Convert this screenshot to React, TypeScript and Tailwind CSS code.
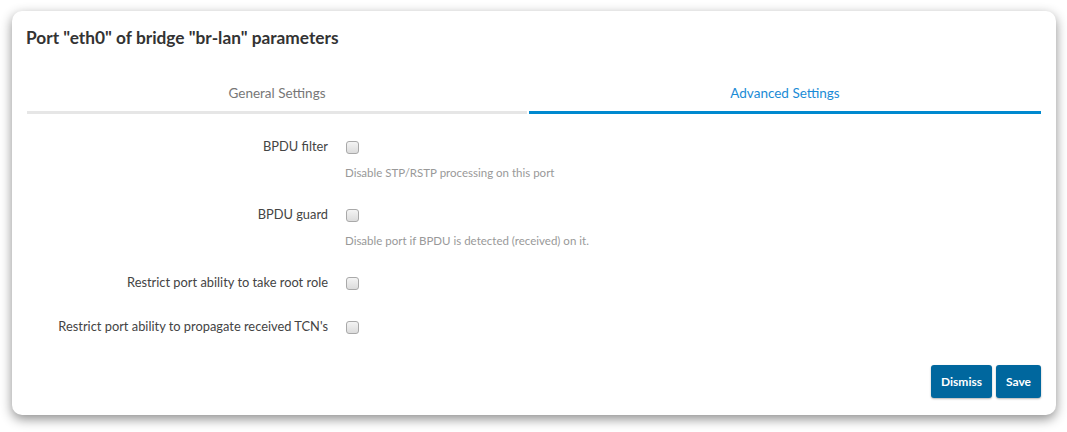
import React from "react";

const rows = [
  { label: "BPDU filter", help: "Disable STP/RSTP processing on this port" },
  { label: "BPDU guard", help: "Disable port if BPDU is detected (received) on it." },
  { label: "Restrict port ability to take root role" },
  { label: "Restrict port ability to propagate received TCN's" },
];

function Checkbox() {
  return (
    <span className="block h-[13px] w-[13px] rounded-[3px] border border-[#a9a9a9] bg-gradient-to-b from-[#f4f4f4] to-[#dcdcdc]" />
  );
}

export default function App() {
  return (
    <div className="min-h-screen bg-white pl-[12px] pt-[11px] font-['Lato','Noto_Sans',sans-serif]">
      <div className="flex h-[404px] w-[1044px] flex-col rounded-[10px] bg-white px-[15px] shadow-[0_4px_12px_rgba(0,0,0,0.45)]">
        <h1 className="-ml-[1px] mt-[17px] h-[20px] text-[17.3px] font-bold leading-[20px] text-[#333]">
          Port "eth0" of bridge "br-lan" parameters
        </h1>
        <div className="mt-[24px] flex gap-[2px]">
          <div className="flex h-[42px] w-[500px] items-center justify-center border-b-[3px] border-[#e6e6e6] pt-[3px] text-[13.5px] text-[#777]">
            General Settings
          </div>
          <div className="flex h-[42px] flex-1 items-center justify-center border-b-[3px] border-[#0089cf] pt-[3px] text-[13.5px] text-[#1a8bd6]">
            Advanced Settings
          </div>
        </div>
        <div className="mt-[11px] flex flex-col">
          {rows.map((r) => (
            <div key={r.label} className="grid grid-cols-[301px_1fr] gap-x-[18px]">
              <div className="flex h-[44px] items-center justify-end text-[12.85px] text-[#444]">
                {r.label}
              </div>
              <div className="flex h-[44px] items-center">
                <Checkbox />
              </div>
              {r.help && (
                <>
                  <div />
                  <div className="-ml-[1px] -mt-[4px] h-[28px] text-[11.5px] leading-[16px] text-[#999]">{r.help}</div>
                </>
              )}
            </div>
          ))}
        </div>
        <div className="mb-[17px] mt-auto flex justify-end gap-[4px]">
          <button className="h-[33px] rounded-[3px] bg-[#00679e] px-[10px] text-[12px] font-bold text-white shadow-[0_1px_2px_rgba(0,0,0,0.3)]">
            Dismiss
          </button>
          <button className="h-[33px] rounded-[3px] bg-[#00679e] px-[10px] text-[12px] font-bold text-white shadow-[0_1px_2px_rgba(0,0,0,0.3)]">
            Save
          </button>
        </div>
      </div>
    </div>
  );
}
